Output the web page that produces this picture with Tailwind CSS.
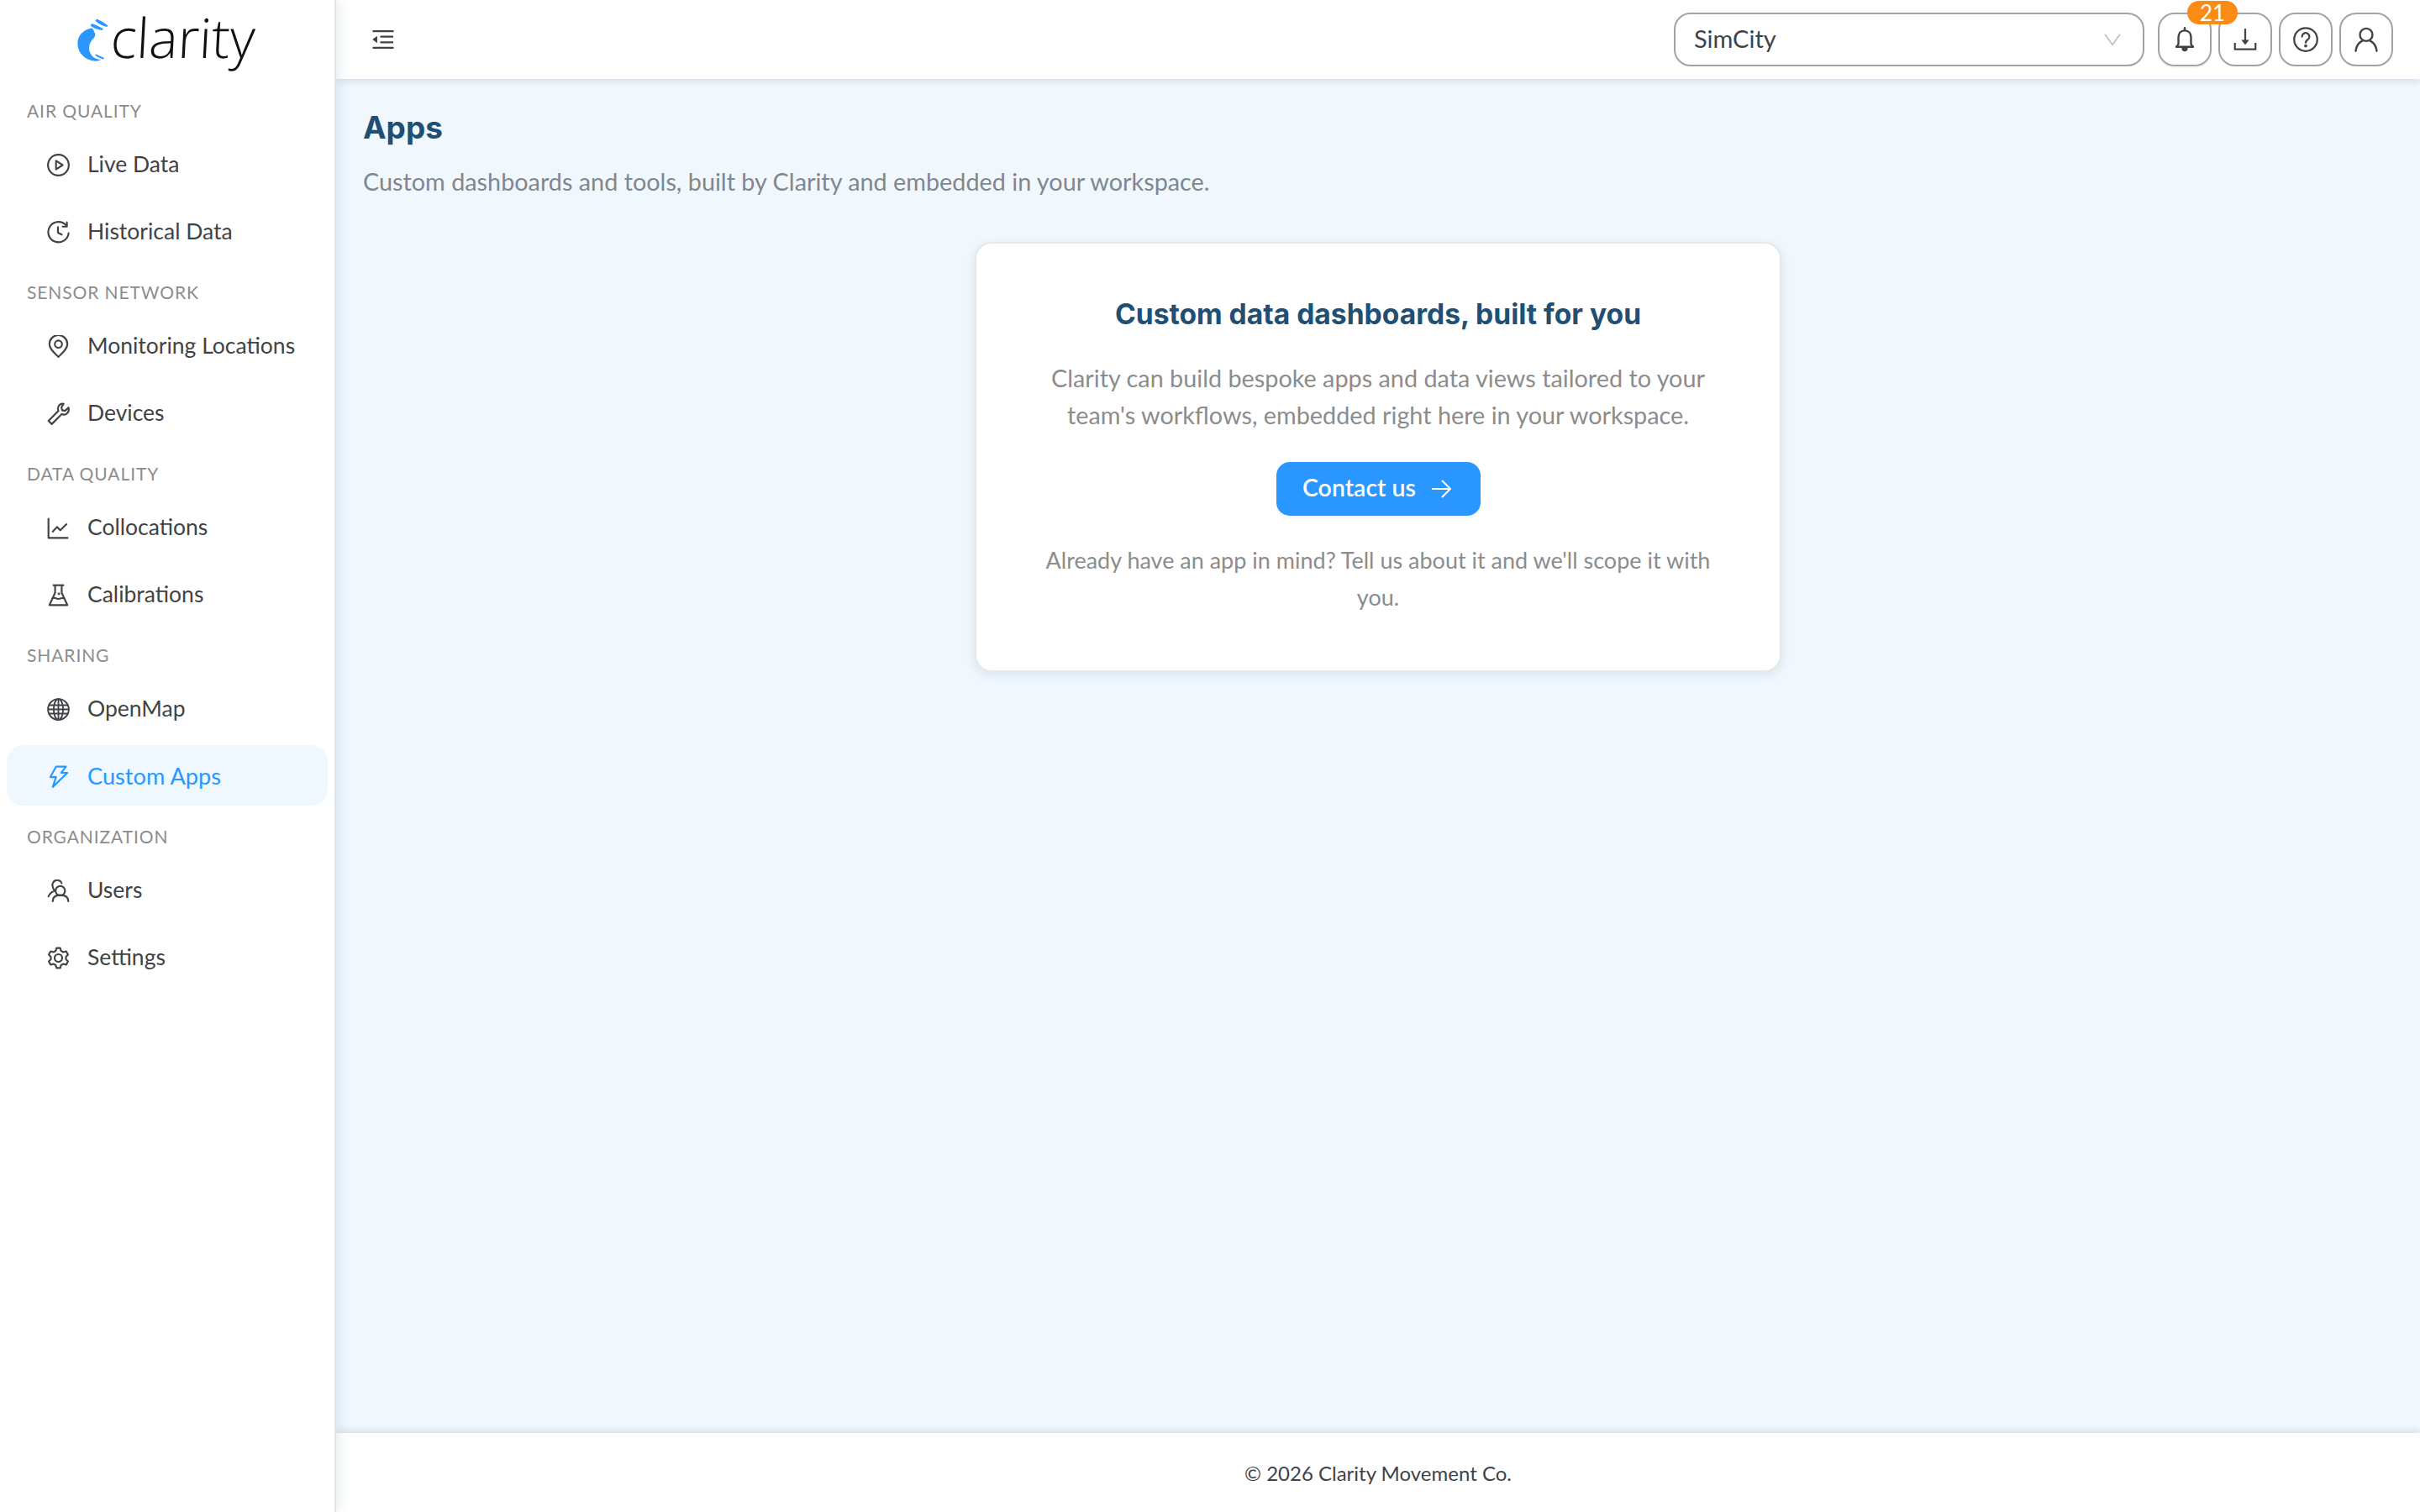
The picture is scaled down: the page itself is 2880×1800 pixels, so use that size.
<!doctype html>
<html>
<head>
<meta charset="utf-8">
<script src="https://cdn.jsdelivr.net/npm/@tailwindcss/browser@4"></script>
</head>
<body class="font-['Lato',sans-serif]">
<div class="flex h-[1800px] w-[2880px] overflow-hidden bg-[#f0f7fd] text-[#3f4346]">
  <aside class="relative z-20 flex h-full w-[400px] shrink-0 flex-col border-r-2 border-[#dfe3e6] bg-white shadow-[4px_0_12px_rgba(30,70,110,0.10)]">
    <div class="flex h-[94px] items-center pl-[88px]">
      <svg class="mt-[2px] h-[56px] w-[44px] shrink-0" viewBox="88 20 44 56" fill="#2997ff"><path d="M109 33.500C101 35 94 40 92.500 49c-1 9 3.500 17 11 21 4 2 9 3 13 2.500l4-1.500c-4.500-.2-8-1.500-10.500-4-2.500-3-4-6-4-9.500 0-3.500 1-7 4-10.500 2.500-2.500 4-5 3-7.500-1-2-2.500-6-4-6z"/><path d="M113.500 25l1.500-2.500c4 1.500 9 4.500 13.500 8l-1 1.500c-5-1-10-3.500-14-7z"/><path d="M107.500 30.500l2-2.500c4 1.500 9 3.500 13.500 6.500l-1.500 1.500c-5-.5-10.500-2.500-14-5.500z"/><path d="M113 65.500l1-1 10 4.500-1 1.500c-3.500-1-7-2.500-10-5z"/></svg>
      <span class="-mt-[5px] -skew-x-3 font-['Open_Sans',sans-serif] text-[65px] leading-none font-light text-[#111]">clarity</span>
    </div>
    <nav class="flex flex-col px-[8px] pt-[20px] text-[26.5px]">
      <div class="flex h-[36px] items-center pl-[24px] text-[21px] tracking-[0.9px] text-[#8c8c8c]">AIR QUALITY</div>
      <div class="mt-[9px] flex flex-col gap-[8px]">
        <a class="flex h-[72px] items-center gap-[21px] rounded-[20px] pt-[2px] pl-[48px]"><svg class="h-[27px] w-[27px]" viewBox="0 0 24 24" fill="none" stroke="currentColor" stroke-width="1.9" stroke-linejoin="round"><circle cx="12" cy="12" r="11"/><path d="M9.500 7.500v9L16.500 12z"/></svg>Live Data</a>
        <a class="flex h-[72px] items-center gap-[21px] rounded-[20px] pt-[2px] pl-[48px]"><svg class="h-[27px] w-[27px]" viewBox="0 0 24 24" fill="none" stroke="currentColor" stroke-width="1.9" stroke-linecap="round" stroke-linejoin="round"><path d="M20.500 5A10.800 10.800 0 1 0 22.800 13"/><path d="M21 1.500V6h-4.500"/><path d="M11.500 6.500V12.500l4 2"/></svg>Historical Data</a>
      </div>
      <div class="mt-[19px] flex h-[36px] items-center pl-[24px] text-[21px] tracking-[0.9px] text-[#8c8c8c]">SENSOR NETWORK</div>
      <div class="mt-[9px] flex flex-col gap-[8px]">
        <a class="flex h-[72px] items-center gap-[21px] rounded-[20px] pt-[2px] pl-[48px]"><svg class="h-[27px] w-[27px]" viewBox="0 0 24 24" fill="none" stroke="currentColor" stroke-width="1.9" stroke-linejoin="round"><path d="M12 23C7 18 2.500 14.500 2.500 9.500a9.500 9.500 0 0 1 19 0C21.500 14.500 17 18 12 23z"/><circle cx="12" cy="9.500" r="3.800"/></svg>Monitoring Locations</a>
        <a class="flex h-[72px] items-center gap-[21px] rounded-[20px] pt-[2px] pl-[48px]"><svg class="h-[27px] w-[27px]" viewBox="0 0 24 24" fill="none" stroke="currentColor" stroke-width="1.9" stroke-linejoin="round"><path d="M17.500 1.500c-3-.5-6 1.500-6 5 0 1 .2 1.800.5 2.500L1.500 19.500l3.500 3.500L15.500 12.500c3.500 1.500 7.500-1 7.500-5 0-.8-.1-1.300-.4-2l-3.600 3.500-3-.7-.8-3z"/></svg>Devices</a>
      </div>
      <div class="mt-[19px] flex h-[36px] items-center pl-[24px] text-[21px] tracking-[0.9px] text-[#8c8c8c]">DATA QUALITY</div>
      <div class="mt-[9px] flex flex-col gap-[8px]">
        <a class="flex h-[72px] items-center gap-[21px] rounded-[20px] pt-[2px] pl-[48px]"><svg class="h-[27px] w-[27px]" viewBox="0 0 24 24" fill="none" stroke="currentColor" stroke-width="1.9" stroke-linejoin="round"><path d="M1.500 1.500v21h21"/><path d="M5.500 16.500l5-5.500 3.500 3.500 7-7"/></svg>Collocations</a>
        <a class="flex h-[72px] items-center gap-[21px] rounded-[20px] pt-[2px] pl-[48px]"><svg class="h-[27px] w-[27px]" viewBox="0 0 24 24" fill="none" stroke="currentColor" stroke-width="1.900" stroke-linejoin="round"><path d="M6 1.500h12"/><path d="M8.500 1.500v8L2.500 22.500h19l-6-13v-8"/><path d="M5.500 15.500c3-2 5 1 7 .5 2-.5 3.500-1.500 6-.5"/><circle cx="12.500" cy="10.500" r=".5" fill="currentColor"/></svg>Calibrations</a>
      </div>
      <div class="mt-[19px] flex h-[36px] items-center pl-[24px] text-[21px] tracking-[0.9px] text-[#8c8c8c]">SHARING</div>
      <div class="mt-[9px] flex flex-col gap-[8px]">
        <a class="flex h-[72px] items-center gap-[21px] rounded-[20px] pt-[2px] pl-[48px]"><svg class="h-[27px] w-[27px]" viewBox="0 0 24 24" fill="none" stroke="currentColor" stroke-width="1.700"><circle cx="12" cy="12" r="11"/><ellipse cx="12" cy="12" rx="5" ry="11"/><path d="M12 1v22M2 7.500h20M1 12h22M2 16.500h20"/></svg>OpenMap</a>
        <a class="flex h-[72px] items-center gap-[21px] rounded-[20px] bg-[#f0f8ff] pt-[2px] pl-[48px] text-[27.2px] text-[#2997ff]"><svg class="h-[27px] w-[27px]" viewBox="0 0 24 24" fill="none" stroke="currentColor" stroke-width="1.900" stroke-linejoin="round"><path d="M9.500 1.500H20l-5 6.500h6.500L6 23l3.500-10.500H3.500z"/></svg>Custom Apps</a>
      </div>
      <div class="mt-[19px] flex h-[36px] items-center pl-[24px] text-[21px] tracking-[0.9px] text-[#8c8c8c]">ORGANIZATION</div>
      <div class="mt-[9px] flex flex-col gap-[8px]">
        <a class="flex h-[72px] items-center gap-[21px] rounded-[20px] pt-[2px] pl-[48px]"><svg class="h-[27px] w-[27px]" viewBox="0 0 24 24" fill="none" stroke="currentColor" stroke-width="1.900" stroke-linecap="round"><circle cx="14" cy="12" r="5"/><path d="M6 23c0-5 3.500-6.500 8-6.500s8.500 1.500 8.500 6.500"/><path d="M6 7.500A5 5 0 0 1 15.500 4M6 8c.5 1.500 1 3 2 4-3 1-5.500 3-6.500 6"/></svg>Users</a>
        <a class="flex h-[72px] items-center gap-[21px] rounded-[20px] pt-[2px] pl-[48px]"><svg class="h-[27px] w-[27px]" viewBox="0 0 24 24" fill="none" stroke="currentColor" stroke-width="1.900" stroke-linejoin="round"><circle cx="12" cy="12" r="4"/><path d="M10 1.500h4l.8 3 2.400 1.300 3-.9 2 3.500-2.200 2.200v2.800l2.200 2.200-2 3.500-3-.9-2.400 1.300-.8 3h-4l-.8-3-2.400-1.300-3 .9-2-3.500 2.200-2.200v-2.800L1.800 8.400l2-3.500 3 .9 2.400-1.300z"/></svg>Settings</a>
      </div>
    </nav>
  </aside>
  <div class="flex min-w-0 flex-1 flex-col">
    <header class="relative z-10 flex h-[94px] shrink-0 items-center justify-between bg-white pr-[32px] pl-[42px] shadow-[0_2px_8px_rgba(30,60,90,0.15)]">
      <svg class="h-[28px] w-[28px]" viewBox="64 64 896 896" fill="#3f4346"><path d="M408 442h480c4.400 0 8-3.600 8-8v-56c0-4.400-3.600-8-8-8H408c-4.400 0-8 3.600-8 8v56c0 4.400 3.600 8 8 8zm-8 204c0 4.400 3.600 8 8 8h480c4.400 0 8-3.600 8-8v-56c0-4.400-3.600-8-8-8H408c-4.400 0-8 3.600-8 8v56zm504-486H120c-4.400 0-8 3.600-8 8v56c0 4.400 3.600 8 8 8h784c4.400 0 8-3.600 8-8v-56c0-4.400-3.600-8-8-8zm0 632H120c-4.400 0-8 3.600-8 8v56c0 4.400 3.600 8 8 8h784c4.400 0 8-3.600 8-8v-56c0-4.400-3.600-8-8-8zM115.400 518.900L271.700 642c5.800 4.600 14.400.5 14.400-6.900V388.900c0-7.400-8.500-11.500-14.400-6.900L115.400 505.100a8.740 8.740 0 000 13.800z"/></svg>
      <div class="flex items-center gap-[8px]">
        <div class="mr-[8px] flex h-[64px] w-[560px] items-center justify-between rounded-[20px] border-2 border-[#a3a3a3] pr-[25px] pl-[22px] text-[29px]"><span class="-mt-[2px]">SimCity</span><svg class="h-[18px] w-[22px]" viewBox="0 0 24 20" fill="none" stroke="#bdbdbd" stroke-width="1.800"><path d="M2 3l10 14L22 3"/></svg></div>
        <button class="relative flex h-[64px] w-[64px] items-center justify-center rounded-[20px] border-2 border-[#a3a3a3] shadow-[0_2px_0_rgba(0,0,0,0.03)]"><svg class="h-[30px] w-[30px]" viewBox="0 0 24 24" fill="none" stroke="currentColor" stroke-width="1.900" stroke-linejoin="round" stroke-linecap="round"><path d="M12 3.500c-4 0-6 3-6 6.500v6.500l-2 2.500h16l-2-2.500V10c0-3.500-2-6.500-6-6.500zM12 1v2.500"/><path d="M10 20c0 1.500 1 2.500 2 2.500s2-1 2-2.500z" fill="currentColor"/></svg>
          <span class="absolute top-[-16px] left-[33px] z-10 flex h-[28px] w-[60px] items-center justify-center rounded-[14px] bg-[#fa8c16] text-[26px] leading-none text-white">21</span></button>
        <button class="flex h-[64px] w-[64px] items-center justify-center rounded-[20px] border-2 border-[#a3a3a3]"><svg class="h-[28px] w-[28px]" viewBox="0 0 24 24" fill="none" stroke="currentColor" stroke-width="1.900"><path d="M1.500 15.500v6.500h21v-6.500"/><path d="M12 1v14"/><path d="M8 12.500h8L12 17.500z" fill="currentColor" stroke="none"/></svg></button>
        <button class="flex h-[64px] w-[64px] items-center justify-center rounded-[20px] border-2 border-[#a3a3a3]"><svg class="h-[30px] w-[30px]" viewBox="0 0 24 24" fill="none" stroke="currentColor" stroke-width="1.800" stroke-linecap="round"><circle cx="12" cy="12" r="11"/><path d="M8.500 9.200a3.500 3.500 0 1 1 5.300 3c-1.300.8-1.800 1.500-1.800 2.800"/><circle cx="12" cy="18" r=".6" fill="currentColor"/></svg></button>
        <button class="flex h-[64px] w-[64px] items-center justify-center rounded-[20px] border-2 border-[#a3a3a3]"><svg class="h-[30px] w-[30px]" viewBox="0 0 24 24" fill="none" stroke="currentColor" stroke-width="1.900" stroke-linecap="round"><circle cx="12" cy="7.500" r="6"/><path d="M2 23c.5-5.500 4-8.500 5.800-9.500M22 23c-.5-5.500-4-8.500-5.800-9.500"/></svg></button>
      </div>
    </header>
    <main class="flex min-h-0 flex-1 flex-col px-[32px] pt-[32px]">
      <h1 class="h-[52px] font-['Inter',sans-serif] text-[37px] leading-[52px] font-bold text-[#204f73]">Apps</h1>
      <p class="mt-[18px] text-[28.8px] leading-[40px] text-[#7f8890]">Custom dashboards and tools, built by Clarity and embedded in your workspace.</p>
      <section class="mx-auto mt-[52px] flex h-[512px] w-[960px] flex-col items-center rounded-[20px] border-2 border-[#e6e8ea] bg-white pt-[60px] text-center shadow-[0_4px_12px_rgba(30,70,110,0.10)]">
        <h2 class="font-['Inter',sans-serif] text-[33.6px] leading-[48px] font-bold text-[#204f73]">Custom data dashboards, built for you</h2>
        <p class="mt-[30px] text-[28.8px] leading-[44px] text-[#8c8c8c]">Clarity can build bespoke apps and data views tailored to your<br>team's workflows, embedded right here in your workspace.</p>
        <a class="mt-[34px] flex h-[64px] w-[243px] items-center justify-center gap-[18px] rounded-[16px] bg-[#2997ff] pr-[3px] text-[28.500px] font-semibold text-white shadow-[0_4px_0_rgba(41,151,255,0.06)]"><span class="-mt-[3px]">Contact us</span><svg class="h-[24px] w-[24px]" viewBox="0 0 24 24" fill="none" stroke="currentColor" stroke-width="2"><path d="M1 12h22M13 2l10 10-10 10"/></svg></a>
        <p class="mt-[31px] text-[27px] leading-[44px] text-[#8c8c8c]">Already have an app in mind? Tell us about it and we'll scope it with<br>you.</p>
      </section>
    </main>
    <footer class="relative z-10 flex h-[94px] shrink-0 items-center justify-center bg-white pt-[2px] text-[24px] text-[#3f4346] shadow-[0_-2px_8px_rgba(30,60,90,0.15)]">© 2026 Clarity Movement Co.</footer>
  </div>
</div>
</body>
</html>
